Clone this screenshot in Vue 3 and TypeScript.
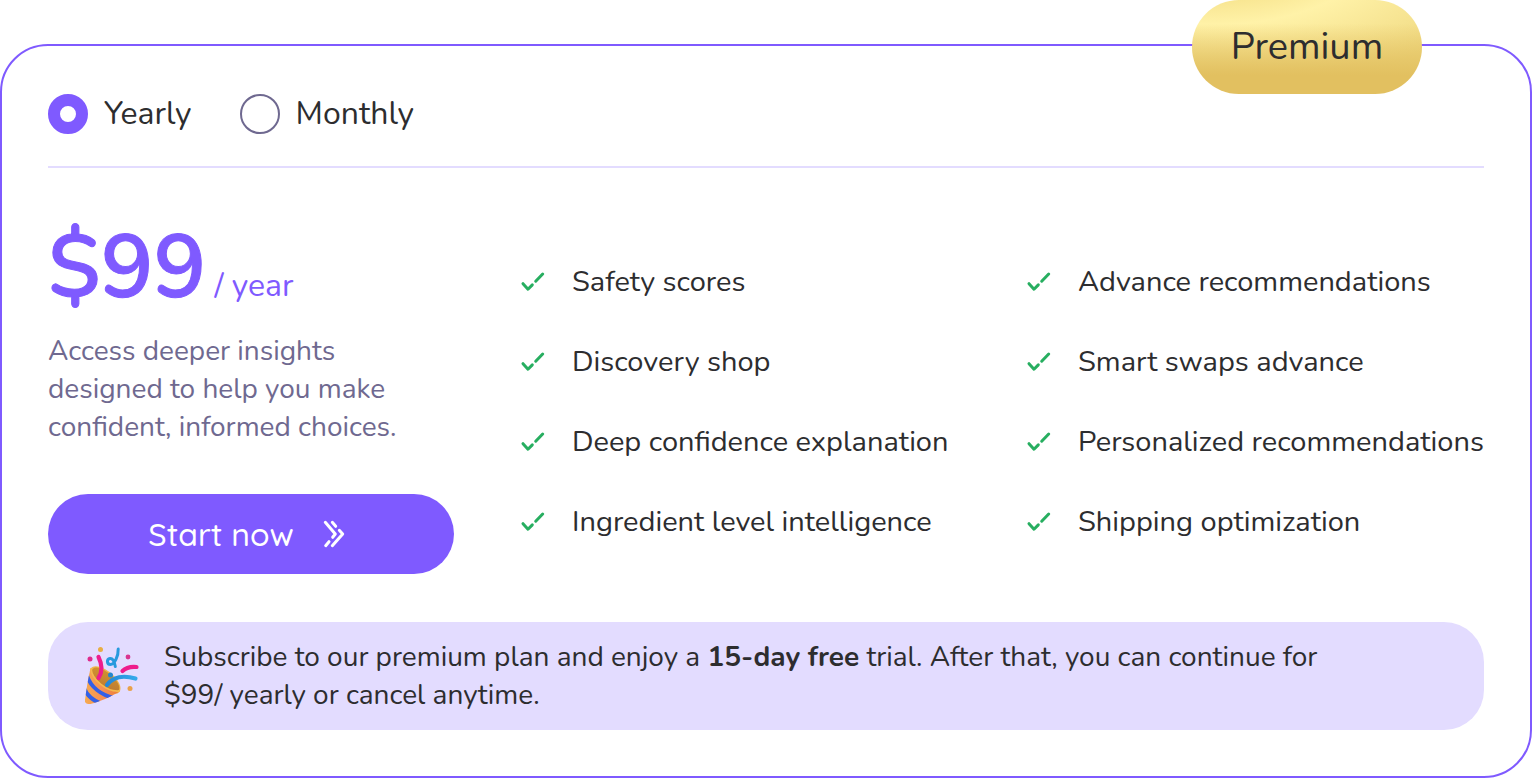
<script setup lang="ts">
import { ref } from 'vue'

type Period = 'yearly' | 'monthly'

const period = ref<Period>('yearly')

const periods: { value: Period; label: string }[] = [
  { value: 'yearly', label: 'Yearly' },
  { value: 'monthly', label: 'Monthly' },
]

const features: string[] = [
  'Safety scores',
  'Advance recommendations',
  'Discovery shop',
  'Smart swaps advance',
  'Deep confidence explanation',
  'Personalized recommendations',
  'Ingredient level intelligence',
  'Shipping optimization',
]
</script>

<template>
  <main class="page">
    <section class="card">
      <span class="badge">Premium</span>

      <div class="periods" role="radiogroup">
        <label v-for="p in periods" :key="p.value" class="period">
          <input v-model="period" class="radio" type="radio" name="period" :value="p.value" />
          <span>{{ p.label }}</span>
        </label>
      </div>

      <div class="body">
        <div class="offer">
          <p class="price"><span class="amount">$99</span><span class="per">/ year</span></p>
          <p class="summary">Access deeper insights designed to help you make confident, informed choices.</p>
          <button class="cta" type="button">
            <span>Start now</span>
            <svg class="cta-icon" viewBox="0 0 40 40" aria-hidden="true">
              <path d="M11.3 8.3 21.3 20l-2.6 3.3M18.3 8.3l3.4 4M25.3 16.3 28.7 20 18.3 31.7M11.7 31.7l3.3-4" />
            </svg>
          </button>
        </div>

        <ul class="features">
          <li v-for="f in features" :key="f" class="feature">
            <svg class="check" viewBox="0 0 30 30" aria-hidden="true">
              <path d="M5 16.7 10 22.2 14.3 17.9M17.7 14.2 24.7 7" />
            </svg>
            <span>{{ f }}</span>
          </li>
        </ul>
      </div>

      <div class="notice">
        <svg class="party" viewBox="14 12 56 60" aria-hidden="true">
          <defs>
            <linearGradient id="cone" x1="0" x2="1">
              <stop offset="0" stop-color="#f6ae4e" />
              <stop offset="0.5" stop-color="#f58f55" />
              <stop offset="1" stop-color="#e9792f" />
            </linearGradient>
            <linearGradient id="inside" x1="0" x2="1" y1="0" y2="1">
              <stop offset="0" stop-color="#d6962f" />
              <stop offset="1" stop-color="#b97632" />
            </linearGradient>
            <linearGradient id="blue" x1="0" x2="1">
              <stop offset="0" stop-color="#2387d6" />
              <stop offset="1" stop-color="#35a9ea" />
            </linearGradient>
            <clipPath id="cone-clip">
              <path d="M20.5 35C22 46 36 58 49.5 57.5C42 62 30 68 20.5 70C17 70.5 14.5 69 15 66C16.500 55 18 44 20.5 35Z" />
            </clipPath>
          </defs>
          <ellipse cx="35.2" cy="46" rx="18.5" ry="9" transform="rotate(40 35.2 46)" fill="#f0b548" />
          <ellipse cx="35.6" cy="45.8" rx="16.8" ry="7.4" transform="rotate(40 35.6 45.8)" fill="url(#inside)" />
          <g clip-path="url(#cone-clip)">
            <path d="M12 30H54V74H12Z" fill="url(#cone)" />
            <path d="M17 42C21 53 31 61 44 64" fill="none" stroke="#3360e8" stroke-width="4" />
            <path d="M14 54C17 62 24 67 32 70" fill="none" stroke="#3360e8" stroke-width="4" />
          </g>
          <path d="M21 35C22 45 36 58 49 57" fill="none" stroke="#f4b84e" stroke-width="1.8" stroke-linecap="round" />
          <g fill="none" stroke-linecap="round" stroke-width="4.2">
            <path d="M28.5 23C32.5 31 32.5 38 28.5 44" stroke="#ee1c8c" />
            <path d="M52.5 37C56 33.5 61 32.5 66.5 33" stroke="#ee1c8c" />
            <path d="M37 51C43 42.5 54 41 65.5 44.5" stroke="url(#blue)" />
            <path d="M48.2 15C48.5 22 44.5 30.5 40.5 30.5C36.5 30.5 36.5 25 40 24.5C43.5 24 44.5 28 45.3 32.5" stroke="#279ade" stroke-width="3" />
          </g>
          <circle cx="30.5" cy="15.5" r="2.5" fill="#e8ae43" />
          <circle cx="20" cy="25" r="2.5" fill="#de2b8c" />
          <circle cx="58" cy="23" r="2.4" fill="#d9338f" />
          <circle cx="40.5" cy="41" r="2.5" fill="#2387d0" />
          <circle cx="60" cy="54.5" r="2.5" fill="#e9a14a" />
        </svg>
        <p class="notice-text">
          Subscribe to our premium plan and enjoy a <strong>15-day free</strong> trial. After that, you can continue for
          $99/ yearly or cancel anytime.
        </p>
      </div>
    </section>
  </main>
</template>

<style>
body {
  margin: 0;
  background: #fff;
}
</style>

<style scoped>
.page {
  padding-top: 44px;
  font-family: Nunito, Lato, "Open Sans", sans-serif;
  color: #2d2d2f;
}

.page * {
  box-sizing: border-box;
}

p,
ul {
  margin: 0;
  padding: 0;
}

.card {
  position: relative;
  box-sizing: border-box;
  padding: 48px 46px 46px;
  border: 2px solid #7f5aff;
  border-radius: 48px;
}

.badge {
  position: absolute;
  top: -46px;
  right: 108px;
  min-width: 230px;
  padding: 23px 36px;
  border-radius: 47px;
  background:
    linear-gradient(to bottom, rgba(226, 192, 96, 0) 25%, #e2c060 80%),
    radial-gradient(300px 134px at 20px -45px, #f3dc80 20%, #fff2a8 52%, #f0d981 100%);
  font-size: 38px;
  line-height: 48px;
  text-align: center;
}

.periods {
  display: flex;
  gap: 48px;
  padding-bottom: 32px;
  border-bottom: 2px solid #e3dcff;
  font-size: 32px;
  line-height: 40px;
}

.period {
  display: flex;
  align-items: center;
  gap: 16px;
}

.radio {
  appearance: none;
  width: 40px;
  height: 40px;
  margin: 0;
  border: 2px solid #6f6990;
  border-radius: 50%;
}

.radio:checked {
  border: 12px solid #7f5aff;
}

.body {
  display: grid;
  grid-template-columns: 406px 1fr;
  align-items: end;
  gap: 64px;
  padding: 48px 0;
}

.price {
  display: flex;
  align-items: baseline;
  gap: 8px;
  color: #7f5aff;
  line-height: 102px;
}

.amount {
  font-size: 88px;
  font-weight: 600;
  -webkit-text-stroke: 1px currentColor;
}

.per {
  font-size: 32px;
  line-height: 40px;
}

.summary {
  margin-top: 14px;
  color: #6f6990;
  font-size: 28px;
  line-height: 38px;
}

.cta {
  display: flex;
  align-items: center;
  justify-content: center;
  gap: 20px;
  width: 100%;
  height: 80px;
  margin-top: 48px;
  padding: 0;
  border: 0;
  border-radius: 40px;
  background: #7f5aff;
  color: #fff;
  font-family: Quicksand, Nunito, Lato, sans-serif;
  font-size: 32px;
  font-weight: 500;
  line-height: 40px;
}

.cta-icon {
  width: 40px;
  height: 40px;
  fill: none;
  stroke: #fff;
  stroke-width: 3;
  stroke-linecap: round;
  stroke-linejoin: round;
}

.features {
  display: grid;
  grid-template-columns: 1fr 1fr;
  gap: 40px 46px;
  padding-bottom: 32px;
  list-style: none;
  font-size: 29px;
  line-height: 40px;
}

.feature {
  display: flex;
  align-items: center;
  gap: 24px;
  white-space: nowrap;
}

.check {
  flex: none;
  width: 30px;
  height: 30px;
  fill: none;
  stroke: #27ae60;
  stroke-width: 3;
  stroke-linecap: round;
  stroke-linejoin: round;
}

.notice {
  display: flex;
  align-items: center;
  gap: 24px;
  padding: 16px 36px;
  border-radius: 40px;
  background: #e3dcff;
  font-size: 28px;
  line-height: 38px;
}

.party {
  flex: none;
  width: 56px;
  height: 60px;
}

.notice-text {
  max-width: 1180px;
}
</style>
